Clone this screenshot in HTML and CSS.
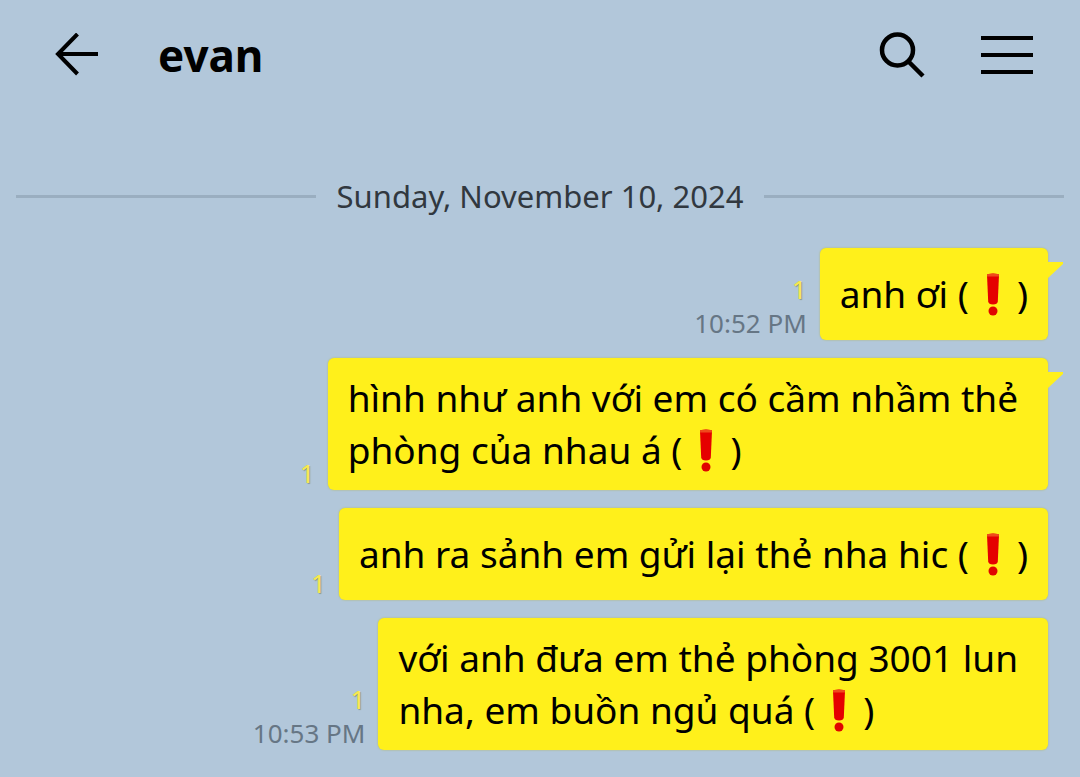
FILE: index.html
```html
<!DOCTYPE html>
<html lang="vi">
<head>
    <meta charset="UTF-8">
    <meta name="viewport" content="width=device-width, initial-scale=1.0">
    <title>evan</title>
    <link rel="stylesheet" href="styles.css">
</head>
<body>
    <svg class="symbols" aria-hidden="true">
        <symbol id="exclamation" viewBox="0 0 48 46">
            <path d="M18 3Q18 1.500 24 1.500T30 3L28.800 29.500Q28.500 32.500 24 32.500T19.200 29.500Z" fill="#e50000"/>
            <path d="M18 3Q18 1.500 24 1.500T30 3L29.900 4.500H18.100Z" fill="#ef4a1c"/>
            <circle cx="24" cy="39" r="4.500" fill="#e00500"/>
        </symbol>
    </svg>

    <header class="chat-header">
        <button type="button" class="icon-button" aria-label="Back">
            <svg width="44" height="44" viewBox="0 0 44 44" fill="none" stroke="#000" stroke-width="4">
                <path d="M22.500 1L3 21L22.500 41M3 21H43"/>
            </svg>
        </button>
        <h1>evan</h1>
        <button type="button" class="icon-button" aria-label="Search">
            <svg width="48" height="48" viewBox="0 0 48 48" fill="none" stroke="#000">
                <circle cx="18.500" cy="19" r="15.500" stroke-width="4.500"/>
                <path d="M29.500 30.500L44 45" stroke-width="4.500"/>
            </svg>
        </button>
        <button type="button" class="icon-button" aria-label="Menu">
            <svg width="52" height="44" viewBox="0 0 52 44" fill="none" stroke="#000" stroke-width="4">
                <path d="M0 5H52M0 22H52M0 39H52"/>
            </svg>
        </button>
    </header>

    <main class="chat">
        <div class="date">Sunday, November 10, 2024</div>

        <div class="message">
            <div class="meta">
                <span class="unread">1</span>
                <time>10:52 PM</time>
            </div>
            <div class="bubble tail">
                <p>anh ơi (<svg class="emoji" role="img" aria-label="❗"><use href="#exclamation"/></svg>)</p>
            </div>
        </div>

        <div class="message">
            <div class="meta">
                <span class="unread">1</span>
            </div>
            <div class="bubble multiline tail">
                <p>hình như anh với em có cầm nhầm thẻ<br>phòng của nhau á (<svg class="emoji" role="img" aria-label="❗"><use href="#exclamation"/></svg>)</p>
            </div>
        </div>

        <div class="message">
            <div class="meta">
                <span class="unread">1</span>
            </div>
            <div class="bubble">
                <p>anh ra sảnh em gửi lại thẻ nha hic (<svg class="emoji" role="img" aria-label="❗"><use href="#exclamation"/></svg>)</p>
            </div>
        </div>

        <div class="message">
            <div class="meta">
                <span class="unread">1</span>
                <time>10:53 PM</time>
            </div>
            <div class="bubble multiline">
                <p>với anh đưa em thẻ phòng 3001 lun<br>nha, em buồn ngủ quá (<svg class="emoji" role="img" aria-label="❗"><use href="#exclamation"/></svg>)</p>
            </div>
        </div>
    </main>
</body>
</html>
```
FILE: styles.css
```css
body {
    margin: 0;
    min-height: 100vh;
    background-color: #b2c7da;
    font-family: "Noto Sans", sans-serif;
    color: #000;
}
.symbols {
    display: none;
}
.chat-header {
    display: flex;
    align-items: center;
    height: 110px;
    padding: 0 47px 0 55px;
}
.chat-header h1 {
    flex: 1;
    margin: 0 0 0 59px;
    font-size: 44px;
    line-height: 60px;
}
.icon-button {
    display: flex;
    padding: 0;
    border: none;
    background: none;
    cursor: pointer;
}
.icon-button + .icon-button {
    margin-left: 54px;
}
.chat {
    display: flex;
    flex-direction: column;
    gap: 18px;
    padding: 62px 32px 28px 16px;
}
.date {
    display: flex;
    align-items: center;
    gap: 21px;
    margin: 0 -16px 10px 0;
    font-size: 31px;
    line-height: 48px;
    color: #31383f;
}
.date::before,
.date::after {
    content: "";
    flex: 1;
    height: 3px;
    background-color: #9aaec0;
}
.message {
    display: flex;
    justify-content: flex-end;
    align-items: flex-end;
    gap: 13px;
}
.meta {
    display: flex;
    flex-direction: column;
    align-items: flex-end;
    font-size: 26px;
    line-height: 34px;
    color: #667685;
}
.unread {
    color: #f9e94e;
    text-shadow: 1px 1px 1px #8b9a88;
}
.bubble {
    position: relative;
    display: flex;
    align-items: center;
    box-sizing: border-box;
    min-height: 92px;
    padding: 14px 20px;
    border-radius: 6px;
    background-color: #fff01b;
    box-shadow: 0 0 2px #b3b85c;
}
.multiline {
    padding-right: 30px;
}
.bubble p {
    margin: 0;
    font-size: 37px;
    line-height: 52px;
    white-space: nowrap;
}
.tail::after {
    content: "";
    position: absolute;
    top: 14px;
    left: 100%;
    width: 15px;
    height: 16px;
    background-color: #fff01b;
    clip-path: polygon(0 0, 100% 0, 100% 12%, 0 100%);
}
.emoji {
    width: 48px;
    height: 46px;
    vertical-align: -10px;
}
```
